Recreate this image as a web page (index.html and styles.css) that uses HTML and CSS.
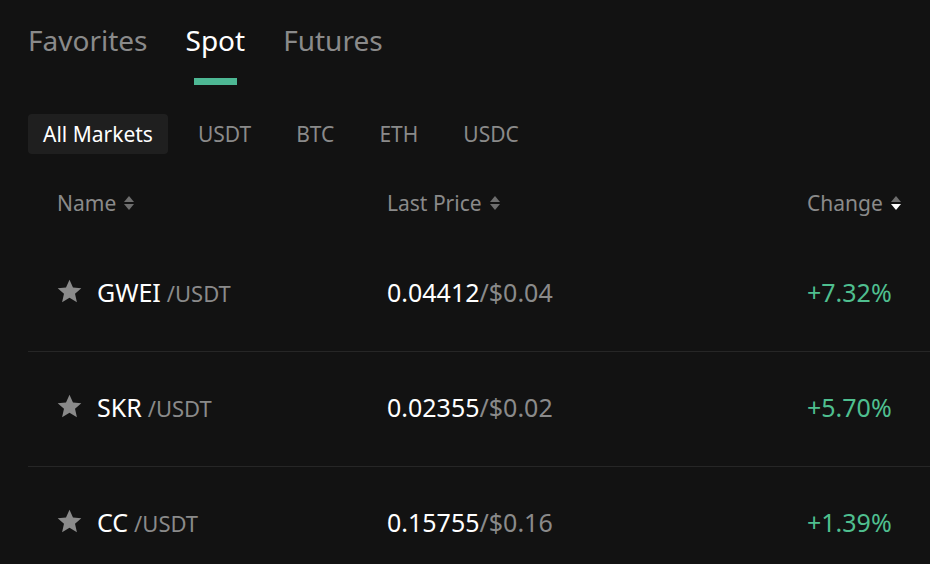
FILE: index.html
```html
<!DOCTYPE html>
<html>
<head>
    <title>Markets</title>
    <link rel="stylesheet" href="styles.css">
</head>
<body>
    <div class="market">
        <div class="tabs">
            <div class="tab">Favorites</div>
            <div class="tab active">Spot</div>
            <div class="tab">Futures</div>
        </div>

        <div class="quotes">
            <div class="quote active">All Markets</div>
            <div class="quote">USDT</div>
            <div class="quote">BTC</div>
            <div class="quote">ETH</div>
            <div class="quote">USDC</div>
        </div>

        <div class="table">
            <div class="row head">
                <div class="cell">Name <span class="sort"><i class="up"></i><i class="down"></i></span></div>
                <div class="cell">Last Price <span class="sort"><i class="up"></i><i class="down"></i></span></div>
                <div class="cell">Change <span class="sort desc"><i class="up"></i><i class="down"></i></span></div>
            </div>

            <div class="row">
                <div class="cell pair">
                    <svg class="star" viewBox="0 0 24 24"><path d="M12 1.5l3.1 7 7.4.6-5.6 4.9 1.7 7.5L12 17.6l-6.6 3.9 1.7-7.5L1.5 9.1l7.4-.6z"/></svg>
                    <span class="base">GWEI</span><span class="quote-sym">/USDT</span>
                </div>
                <div class="cell price">0.04412<span class="usd">/$0.04</span></div>
                <div class="cell change up">+7.32%</div>
            </div>

            <div class="row">
                <div class="cell pair">
                    <svg class="star" viewBox="0 0 24 24"><path d="M12 1.5l3.1 7 7.4.6-5.6 4.9 1.7 7.5L12 17.6l-6.6 3.9 1.7-7.5L1.5 9.1l7.4-.6z"/></svg>
                    <span class="base">SKR</span><span class="quote-sym">/USDT</span>
                </div>
                <div class="cell price">0.02355<span class="usd">/$0.02</span></div>
                <div class="cell change up">+5.70%</div>
            </div>

            <div class="row">
                <div class="cell pair">
                    <svg class="star" viewBox="0 0 24 24"><path d="M12 1.5l3.1 7 7.4.6-5.6 4.9 1.7 7.5L12 17.6l-6.6 3.9 1.7-7.5L1.5 9.1l7.4-.6z"/></svg>
                    <span class="base">CC</span><span class="quote-sym">/USDT</span>
                </div>
                <div class="cell price">0.15755<span class="usd">/$0.16</span></div>
                <div class="cell change up">+1.39%</div>
            </div>
        </div>
    </div>
</body>
</html>
```

FILE: styles.css
```css
body {
    margin: 0;
    background-color: #121212;
    font-family: "Noto Sans", Arial, sans-serif;
    color: #fff;
    overflow: hidden;
}

.market {
    padding-left: 28px;
}

.tabs {
    display: flex;
    gap: 38px;
    padding-top: 20px;
}

.tab {
    position: relative;
    font-size: 28px;
    line-height: 40px;
    color: #8a8a8a;
    height: 65px;
}

.tab.active {
    color: #fff;
}

.tab.active::after {
    content: "";
    position: absolute;
    left: 50%;
    top: 58px;
    width: 43px;
    height: 7px;
    margin-left: -21px;
    background-color: #4db894;
}

.quotes {
    display: flex;
    margin-top: 29px;
}

.quote {
    height: 40px;
    line-height: 40px;
    padding: 0 15px;
    margin-right: 15px;
    font-size: 21px;
    color: #8a8a8a;
    border-radius: 4px;
}

.quote.active {
    background-color: #1f1f1f;
    color: #fff;
}

.table {
    margin-top: 29px;
}

.row {
    display: grid;
    grid-template-columns: 330px 1fr 98px;
    align-items: center;
    padding: 0 25px 5px 29px;
    height: 115px;
    box-sizing: border-box;
    border-bottom: 1px solid #262626;
    font-size: 25px;
}

.row.head {
    height: 40px;
    padding-bottom: 0;
    margin-bottom: 14px;
    border-bottom: none;
    font-size: 21px;
    color: #8a8a8a;
}

.cell {
    display: flex;
    align-items: center;
    white-space: nowrap;
}

.sort {
    display: inline-flex;
    flex-direction: column;
    gap: 2px;
    margin-left: 8px;
}

.sort i {
    width: 0;
    height: 0;
    border-left: 5px solid transparent;
    border-right: 5px solid transparent;
}

.sort .up {
    border-bottom: 6px solid #6e6e6e;
}

.sort .down {
    border-top: 6px solid #6e6e6e;
}

.sort.desc .down {
    border-top-color: #fff;
}

.star {
    width: 27px;
    height: 27px;
    fill: #8a8a8a;
    margin-left: -1px;
    margin-right: 14px;
}

.quote-sym {
    font-size: 22px;
    color: #8a8a8a;
    margin-left: 6px;
    margin-top: 2px;
}

.usd {
    color: #8a8a8a;
}

.change.up {
    color: #4fbf8f;
}
```
